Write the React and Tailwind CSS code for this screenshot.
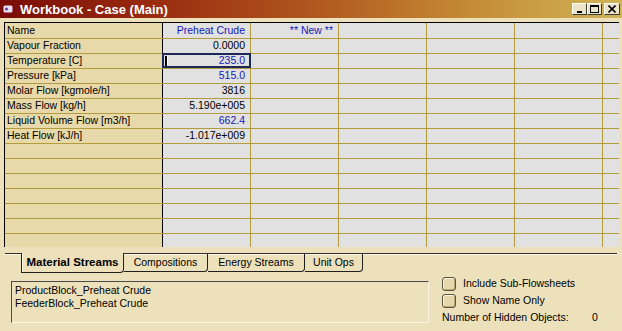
import React from "react";

const rows = [
  { name: "Name", value: "Preheat Crude", blue: true, extra: "** New **" },
  { name: "Vapour Fraction", value: "0.0000" },
  { name: "Temperature [C]", value: "235.0", blue: true, selected: true },
  { name: "Pressure [kPa]", value: "515.0", blue: true },
  { name: "Molar Flow [kgmole/h]", value: "3816" },
  { name: "Mass Flow [kg/h]", value: "5.190e+005" },
  { name: "Liquid Volume Flow [m3/h]", value: "662.4", blue: true },
  { name: "Heat Flow [kJ/h]", value: "-1.017e+009" },
  {}, {}, {}, {}, {}, {}, {},
];

const TitleButton = ({ children, className = "" }) => (
  <div
    className={`h-[12px] flex items-center justify-center bg-[#ece4c8] border-t border-l border-[#fffdf2] border-b border-r border-b-[#3a3a3a] border-r-[#3a3a3a] ${className}`}
  >
    {children}
  </div>
);

const Checkbox = ({ label }) => (
  <div className="flex items-center h-[14px]">
    <div className="w-[14px] h-[14px] rounded-[3px] border border-[#5a5440] bg-[#e6d8aa] shadow-[inset_1px_1px_0_#fbf4dc,inset_-1px_-1px_0_#b8a878]" />
    <span className="ml-[7px]">{label}</span>
  </div>
);

const App = () => {
  return (
    <div
      className="w-[622px] h-[331px] bg-[#ece1bb] flex flex-col overflow-hidden text-[10.5px] text-black"
      style={{ fontFamily: '"Liberation Sans", Arial, sans-serif' }}
    >
      {/* title bar */}
      <div className="h-[18px] flex items-center bg-[linear-gradient(to_right,#7a0c08,#9a2c10_25%,#b0561e_50%,#c48a34_75%,#d0b458)]">
        <svg width="10" height="8" viewBox="0 0 10 8" className="ml-[3px]">
          <rect x="0.5" y="0.5" width="9" height="7" rx="1.5" fill="#e8e0f4" />
          <circle cx="3.5" cy="4" r="1.5" fill="#6a3c9c" />
        </svg>
        <span className="ml-[7px] text-white font-bold text-[13px] leading-none">
          Workbook - Case (Main)
        </span>
        <div className="ml-auto flex items-center pr-[2px]">
          <TitleButton className="w-[15px]">
            <svg width="8" height="8" viewBox="0 0 8 8">
              <rect x="1" y="6" width="5" height="2" fill="#000" />
            </svg>
          </TitleButton>
          <TitleButton className="w-[15px]">
            <svg width="9" height="8" viewBox="0 0 9 8">
              <rect x="0.5" y="0.5" width="8" height="7" fill="none" stroke="#000" />
              <rect x="0" y="0" width="9" height="2" fill="#000" />
            </svg>
          </TitleButton>
          <TitleButton className="w-[16px] ml-[2px]">
            <svg width="8" height="8" viewBox="0 0 8 8">
              <path d="M0.5 0.5 L7.5 7.5 M7.5 0.5 L0.5 7.5" stroke="#000" strokeWidth="1.6" />
            </svg>
          </TitleButton>
        </div>
      </div>

      {/* grid */}
      <div className="mt-[4px] ml-[4px] mr-[3px] border-t border-l border-black">
        {rows.map((r, i) => (
          <div
            key={i}
            className={`flex ${i === 0 ? "h-[16px]" : i === rows.length - 1 ? "h-[13px]" : "h-[15px]"} ${
              i === rows.length - 1 ? "" : "border-b border-[#b49b3c]"
            }`}
          >
            <div className="w-[158px] bg-[#e8d9ab] border-r border-black pl-[2px] flex items-center">
              {r.name}
            </div>
            <div
              className={`relative w-[88px] bg-[#e1e1e1] border-r border-[#b49b3c] flex items-center justify-end pr-[5px] ${
                r.blue ? "text-[#1818b8]" : ""
              }`}
            >
              {r.selected && (
                <div className="absolute left-[-1px] top-[-1px] right-[-1px] bottom-0 border-2 border-[#1c2858]">
                  <div className="absolute left-[1px] top-[1px] w-[3px] h-[10px] border-l-2 border-black bg-white" />
                </div>
              )}
              <span className="relative">{r.value}</span>
            </div>
            <div className="w-[88px] bg-[#e1e1e1] border-r border-[#b49b3c] flex items-center justify-end pr-[5px] text-[#1818b8]">
              {r.extra}
            </div>
            <div className="w-[88px] bg-[#e1e1e1] border-r border-[#b49b3c]" />
            <div className="w-[88px] bg-[#e1e1e1] border-r border-[#b49b3c]" />
            <div className="w-[88px] bg-[#e1e1e1] border-r border-[#b49b3c]" />
            <div className="flex-1 bg-[#e1e1e1]" />
          </div>
        ))}
      </div>

      {/* tabs */}
      <div className="mt-[6px] mx-[5px] h-[20px] border-t border-[#303030] shadow-[0_1px_0_#fbf6e2_inset] flex pl-[16px]">
        <div className="-mt-[1px] w-[103px] h-[20px] bg-[#ece1bb] border-l border-r border-b border-[#202020] rounded-br-[4px] flex items-center justify-center font-bold text-[11.5px] shadow-[inset_1px_0_0_#fbf6e2]">
          Material Streams
        </div>
        <div className="w-[84px] h-[18px] border-r border-b border-[#202020] rounded-br-[4px] flex items-center justify-center">
          Compositions
        </div>
        <div className="w-[97px] h-[18px] border-r border-b border-[#202020] rounded-br-[4px] flex items-center justify-center">
          Energy Streams
        </div>
        <div className="w-[58px] h-[18px] border-r border-b border-[#202020] rounded-br-[4px] flex items-center justify-center">
          Unit Ops
        </div>
      </div>

      {/* bottom panel */}
      <div className="flex items-start">
        <div className="mt-[8px] ml-[11px] w-[418px] h-[42px] border-t border-l border-[#4a4a4a] border-b border-r border-b-[#fbf6e4] border-r-[#fbf6e4] pl-[3px] pt-[2px] leading-[13px]">
          <div>ProductBlock_Preheat Crude</div>
          <div>FeederBlock_Preheat Crude</div>
        </div>
        <div className="mt-[4px] ml-[13px] flex flex-col gap-[3px]">
          <Checkbox label="Include Sub-Flowsheets" />
          <Checkbox label="Show Name Only" />
          <div className="flex h-[14px] items-center">
            <span className="w-[150px]">Number of Hidden Objects:</span>
            <span>0</span>
          </div>
        </div>
      </div>
    </div>
  );
};

export default App;
